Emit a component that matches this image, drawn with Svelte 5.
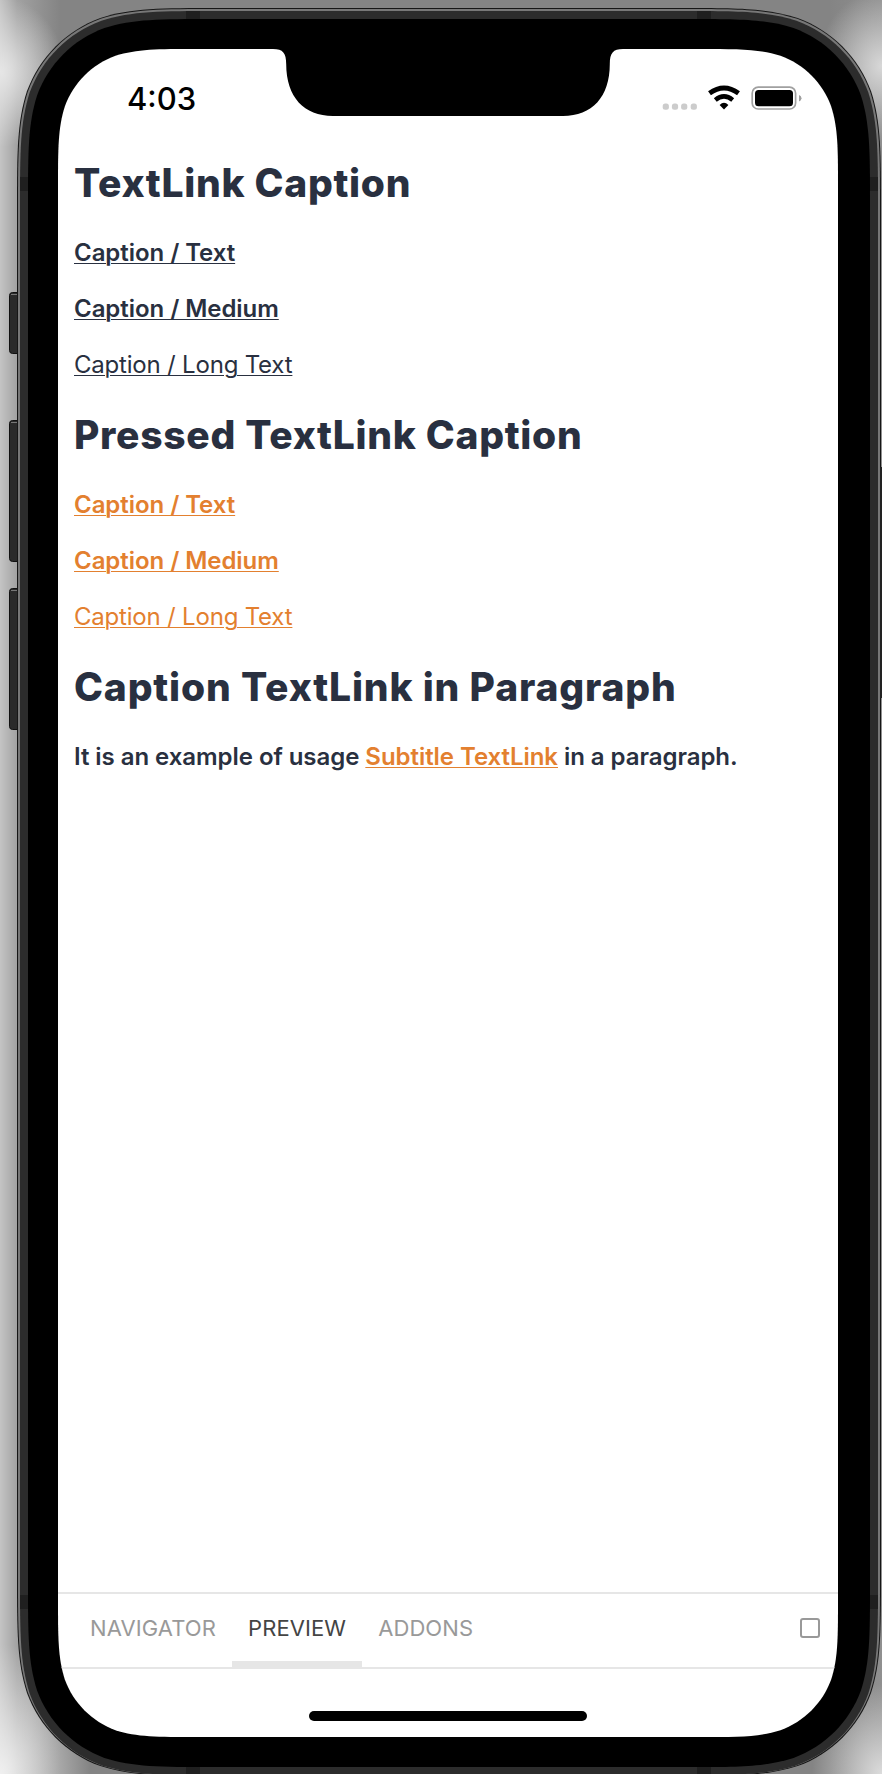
<script>
  const sections = [
    { title: 'TextLink Caption', pressed: false },
    { title: 'Pressed TextLink Caption', pressed: true }
  ];
  const links = [
    { label: 'Caption / Text', weight: 500 },
    { label: 'Caption / Medium', weight: 500 },
    { label: 'Caption / Long Text', weight: 400 }
  ];
  const tabs = [
    { name: 'Navigator', active: false },
    { name: 'Preview', active: true },
    { name: 'Addons', active: false }
  ];

  // Continuous-curvature rounded rectangle.
  function squircle(l, t, r, b, R) {
    const corner = (cx, cy, ux, uy, vx, vy) => {
      // u: direction back along the incoming edge, v: along the outgoing edge
      const p = (a, c) => `${(cx + (ux * a + vx * c) * R).toFixed(2)} ${(cy + (uy * a + vy * c) * R).toFixed(2)}`;
      return `L${p(1.5287, 0)}C${p(1.0885, 0)} ${p(0.8684, 0)} ${p(0.6315, 0.0749)}C${p(0.3728, 0.1691)} ${p(0.1691, 0.3728)} ${p(0.0749, 0.6315)}C${p(0, 0.8684)} ${p(0, 1.0885)} ${p(0, 1.5287)}`;
    };
    return (
      `M${(l + r) / 2} ${t}` +
      corner(r, t, -1, 0, 0, 1) +
      corner(r, b, 0, -1, -1, 0) +
      corner(l, b, 1, 0, 0, -1) +
      corner(l, t, 0, 1, 1, 0) + 'Z'
    );
  }
  const notch =
    'M273 49C283 49 286.200 53 286.200 64C286.200 97 304 116 333 116H563C592 116 609.800 97 609.800 64C609.800 53 613 49 623 49V44H273Z';
</script>

<main class="device">
  <svg class="shell" viewBox="0 0 882 1774" aria-hidden="true">
    <g fill="#2a2a2a" stroke="#111" stroke-width="1">
      <rect x="9.500" y="292.500" width="12" height="61" rx="3" />
      <rect x="9.500" y="420.500" width="12" height="141" rx="3" />
      <rect x="9.500" y="588.500" width="12" height="141" rx="3" />
    </g>
    <path d="M11 294.500h6M11 422.500h6M11 590.500h6" stroke="#777" />
    <path d={squircle(17, 8, 881, 1776, 132)} fill="#161616" />
    <path d={squircle(18, 9, 880, 1775, 131)} fill="#777" />
    <path d={squircle(20, 11, 878, 1775, 129)} fill="#2c2c2c" />
    <path
      d="M186 11h14v10h-14zM697 11h14v10h-14zM20 177h10v14h-10zM868 177h10v14h-10zM20 1595h10v14h-10zM868 1595h10v14h-10zM186 1765h14v10h-14zM697 1765h14v10h-14z"
      fill="#1f1f1f"
    />
    <path d={squircle(28, 19, 870, 1767, 121)} fill="#000" />
    <path d={squircle(58, 49, 838, 1737, 91)} fill="#fff" />
    <path d={notch} fill="#000" />
    <path d="M881 467v231" stroke="#222" stroke-width="2" />
  </svg>

  <div class="screen" style:clip-path={`path("${squircle(0, 0, 780, 1688, 91)}")`}>
    <header class="status">
      <time>4:03</time>
      <svg class="indicators" width="140" height="26" viewBox="0 0 140 26" aria-hidden="true">
        <g fill="#ccc">
          <rect x=".7" y="17.500" width="6.200" height="6.200" rx="2.500" />
          <rect x="9.900" y="17.500" width="6.200" height="6.200" rx="2.500" />
          <rect x="19.100" y="17.500" width="6.200" height="6.200" rx="2.500" />
          <rect x="28.700" y="17.500" width="6.200" height="6.200" rx="2.500" />
        </g>
        <path d="M47.500 7.300Q62 -3.300 76.500 7.300" fill="none" stroke="#000" stroke-width="4.800" />
        <path d="M53.300 14Q62 6.800 70.700 14" fill="none" stroke="#000" stroke-width="4.500" />
        <path d="M62 23.500L57.600 19Q62 14.600 66.400 19Z" fill="#000" />
        <rect x="90.200" y="1.200" width="43.400" height="21.800" rx="6" fill="none" stroke="#a0a0a0" stroke-width="1.700" />
        <rect x="93" y="4" width="38" height="16.300" rx="3.500" fill="#000" />
        <path d="M137 9q2.500 1 2.500 3.300T137 15.600z" fill="#a0a0a0" />
      </svg>
    </header>

    <section class="story">
      {#each sections as section}
        <h1>{section.title}</h1>
        {#each links as link}
          <p><a href="#top" class:pressed={section.pressed} class:regular={link.weight === 400}>{link.label}</a></p>
        {/each}
      {/each}
      <h1 class="wide">Caption TextLink in Paragraph</h1>
      <p class="sentence">It is an example of usage <a href="#top" class="pressed">Subtitle TextLink</a> in a paragraph.</p>
    </section>

    <nav>
      {#each tabs as tab}
        <button class:active={tab.active}>{tab.name.toUpperCase()}</button>
      {/each}
      <span class="toggle"></span>
    </nav>
    <div class="home"><span></span></div>
  </div>
</main>

<style>
  :global(body) { margin: 0; overflow: hidden; }
  .device {
    box-sizing: border-box;
    position: relative;
    width: 882px;
    height: 1774px;
    padding: 49px 44px 37px 58px;
    overflow: hidden;
    background:
      radial-gradient(ellipse 65px 75px at 0 72px, #e6e6e6 0, #e6e6e600 100%),
      radial-gradient(ellipse 65px 75px at 882px 66px, #d8d8d8 0, #d8d8d800 100%),
      radial-gradient(ellipse 90px 130px at 0 1774px, #f0f0f0 0, #f0f0f000 100%),
      radial-gradient(ellipse 70px 90px at 882px 1774px, #dcdcdc 0, #dcdcdc00 100%),
      linear-gradient(90deg, #c4c4c4 0, #a2a2a2 17px, #848484 60px, #848484 830px, #909090 882px);
  }
  .shell { position: absolute; inset: 0; width: 882px; height: 1774px; }
  .screen {
    position: relative;
    display: flex;
    flex-direction: column;
    width: 780px;
    height: 1688px;
    color: #293040;
    font-family: Inter, Roboto, sans-serif;
  }
  .status {
    display: flex;
    justify-content: space-between;
    box-sizing: border-box;
    height: 94px;
    padding: 32px 36px 0 69px;
    color: #000;
  }
  time { margin-top: -1px; font: 500 31px/38px Inter, sans-serif; }
  .indicators { margin-top: 5px; overflow: visible; }
  .story { flex: 1; padding: 16px; }
  h1 { margin: 0; font-size: 39px; line-height: 48px; font-weight: 800; height: 48px; white-space: nowrap; letter-spacing: 0.7px; }
  .wide { letter-spacing: 0.84px; }
  p { margin: 24px 0 0; font-size: 24px; line-height: 32px; font-weight: 600; white-space: nowrap; letter-spacing: -0.05px; }
  h1 + p { margin-top: 30px; }
  p + h1 { margin-top: 30px; }
  a { color: #293040; text-decoration: underline; text-decoration-thickness: 1px; text-underline-offset: 2px; }
  .pressed { color: #e3802f; }
  .regular { font-weight: 400; letter-spacing: -0.2px; }
  nav {
    display: flex;
    box-sizing: border-box;
    height: 77px;
    padding: 0 18px 0 16px;
    border-top: 2px solid #e6e6e6;
    border-bottom: 2px solid #e6e6e6;
  }
  button {
    box-sizing: border-box;
    height: 75px;
    padding: 0 16px;
    border: 0;
    border-bottom: 8px solid transparent;
    background: none;
    color: #999;
    font: 400 22px/69px Inter, sans-serif;
    letter-spacing: 0.1px;
  }
  .active { border-bottom-color: #e6e6e6; color: #444; }
  .toggle {
    box-sizing: border-box;
    width: 20px;
    height: 20px;
    margin: 24px 0 0 auto;
    border: 2px solid #999;
    border-radius: 3px;
  }
  .home { display: flex; justify-content: center; box-sizing: border-box; height: 68px; padding-top: 42px; }
  .home span { width: 278px; height: 10px; border-radius: 5px; background: #000; }
</style>
